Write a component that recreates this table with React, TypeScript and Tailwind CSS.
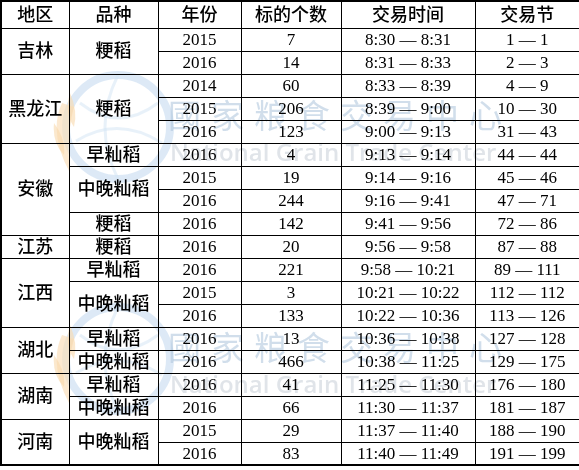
import React from 'react'

type Cell = { text: string; rs?: number }
type Row = { region?: Cell; kind?: Cell; year: string; count: string; time: string; session: string }

const rows: Row[] = [
  { region: { text: '吉林', rs: 2 }, kind: { text: '粳稻', rs: 2 }, year: '2015', count: '7', time: '8:30 — 8:31', session: '1 — 1' },
  { year: '2016', count: '14', time: '8:31 — 8:33', session: '2 — 3' },
  { region: { text: '黑龙江', rs: 3 }, kind: { text: '粳稻', rs: 3 }, year: '2014', count: '60', time: '8:33 — 8:39', session: '4 — 9' },
  { year: '2015', count: '206', time: '8:39 — 9:00', session: '10 — 30' },
  { year: '2016', count: '123', time: '9:00 — 9:13', session: '31 — 43' },
  { region: { text: '安徽', rs: 4 }, kind: { text: '早籼稻' }, year: '2016', count: '4', time: '9:13 — 9:14', session: '44 — 44' },
  { kind: { text: '中晚籼稻', rs: 2 }, year: '2015', count: '19', time: '9:14 — 9:16', session: '45 — 46' },
  { year: '2016', count: '244', time: '9:16 — 9:41', session: '47 — 71' },
  { kind: { text: '粳稻' }, year: '2016', count: '142', time: '9:41 — 9:56', session: '72 — 86' },
  { region: { text: '江苏' }, kind: { text: '粳稻' }, year: '2016', count: '20', time: '9:56 — 9:58', session: '87 — 88' },
  { region: { text: '江西', rs: 3 }, kind: { text: '早籼稻' }, year: '2016', count: '221', time: '9:58 — 10:21', session: '89 — 111' },
  { kind: { text: '中晚籼稻', rs: 2 }, year: '2015', count: '3', time: '10:21 — 10:22', session: '112 — 112' },
  { year: '2016', count: '133', time: '10:22 — 10:36', session: '113 — 126' },
  { region: { text: '湖北', rs: 2 }, kind: { text: '早籼稻' }, year: '2016', count: '13', time: '10:36 — 10:38', session: '127 — 128' },
  { kind: { text: '中晚籼稻' }, year: '2016', count: '466', time: '10:38 — 11:25', session: '129 — 175' },
  { region: { text: '湖南', rs: 2 }, kind: { text: '早籼稻' }, year: '2016', count: '41', time: '11:25 — 11:30', session: '176 — 180' },
  { kind: { text: '中晚籼稻' }, year: '2016', count: '66', time: '11:30 — 11:37', session: '181 — 187' },
  { region: { text: '河南', rs: 2 }, kind: { text: '中晚籼稻', rs: 2 }, year: '2015', count: '29', time: '11:37 — 11:40', session: '188 — 190' },
  { year: '2016', count: '83', time: '11:40 — 11:49', session: '191 — 199' },
]

const cjk = "font-['Liberation_Serif','Noto_Sans_CJK_SC',serif] text-[18px] font-medium"
const num = "font-['Liberation_Serif',serif] text-[17px]"
const td = 'border border-black p-0 text-center leading-none text-black'

function Logo({ top }: { top: number }) {
  return (
    <svg
      className="absolute left-[40px] w-[150px] h-[130px] opacity-50"
      style={{ top }}
      viewBox="0 0 150 130"
      fill="none"
    >
      {/* globe */}
      <circle cx="78" cy="64" r="52" stroke="#8fb9e3" strokeWidth="8" opacity="0.6" />
      <path d="M40 40 Q78 70 118 40" stroke="#a6c9ea" strokeWidth="3" opacity="0.5" />
      <path d="M36 78 Q78 52 122 80" stroke="#a6c9ea" strokeWidth="3" opacity="0.5" />
      <path d="M78 12 Q52 64 78 116" stroke="#a6c9ea" strokeWidth="3" opacity="0.5" />
      {/* wheat */}
      <path d="M22 40 Q8 70 30 110 Q26 74 34 44 Z" fill="#f6c27a" opacity="0.7" />
      <path d="M30 30 Q24 50 34 64 Q38 48 30 30 Z" fill="#f4b45c" opacity="0.6" />
      <path d="M14 60 Q12 80 24 92 Q26 76 14 60 Z" fill="#f4b45c" opacity="0.6" />
    </svg>
  )
}

function Watermark({ top }: { top: number }) {
  return (
    <>
      <Logo top={top - 35} />
      <div
        className="absolute left-[168px] font-['Noto_Sans_CJK_TC',sans-serif] text-[33px] leading-none tracking-[10px] text-[#b3c9de] opacity-60"
        style={{ top }}
      >
        國家粮食交易中心
      </div>
      <div
        className="absolute left-[170px] font-['Open_Sans',sans-serif] font-semibold text-[24px] leading-none text-[#ccd3da] opacity-60"
        style={{ top: top + 42 }}
      >
        National Grain Trade Center
      </div>
    </>
  )
}

export default function App() {
  return (
    <div className="relative w-[579px] h-[470px] bg-white overflow-hidden">
      <table className="w-[579px] table-fixed border-collapse border-2 border-black">
        <colgroup>
          <col className="w-[68px]" />
          <col className="w-[89px]" />
          <col className="w-[83px]" />
          <col className="w-[100px]" />
          <col className="w-[134px]" />
          <col className="w-[105px]" />
        </colgroup>
        <thead>
          <tr className="h-[27px]">
            {['地区', '品种', '年份', '标的个数', '交易时间', '交易节'].map((h) => (
              <th key={h} className={`${td} ${cjk}`}>
                {h}
              </th>
            ))}
          </tr>
        </thead>
        <tbody>
          {rows.map((r, i) => (
            <tr key={i} className="h-[23px]">
              {r.region && (
                <td rowSpan={r.region.rs} className={`${td} ${cjk}`}>
                  {r.region.text}
                </td>
              )}
              {r.kind && (
                <td rowSpan={r.kind.rs} className={`${td} ${cjk}`}>
                  {r.kind.text}
                </td>
              )}
              <td className={`${td} ${num}`}>{r.year}</td>
              <td className={`${td} ${num}`}>{r.count}</td>
              <td className={`${td} ${num}`}>{r.time}</td>
              <td className={`${td} ${num}`}>{r.session}</td>
            </tr>
          ))}
        </tbody>
      </table>

      {/* watermarks over the table */}
      <div className="pointer-events-none absolute inset-0 mix-blend-multiply">
        <Watermark top={98} />
        <Watermark top={330} />
      </div>
    </div>
  )
}
